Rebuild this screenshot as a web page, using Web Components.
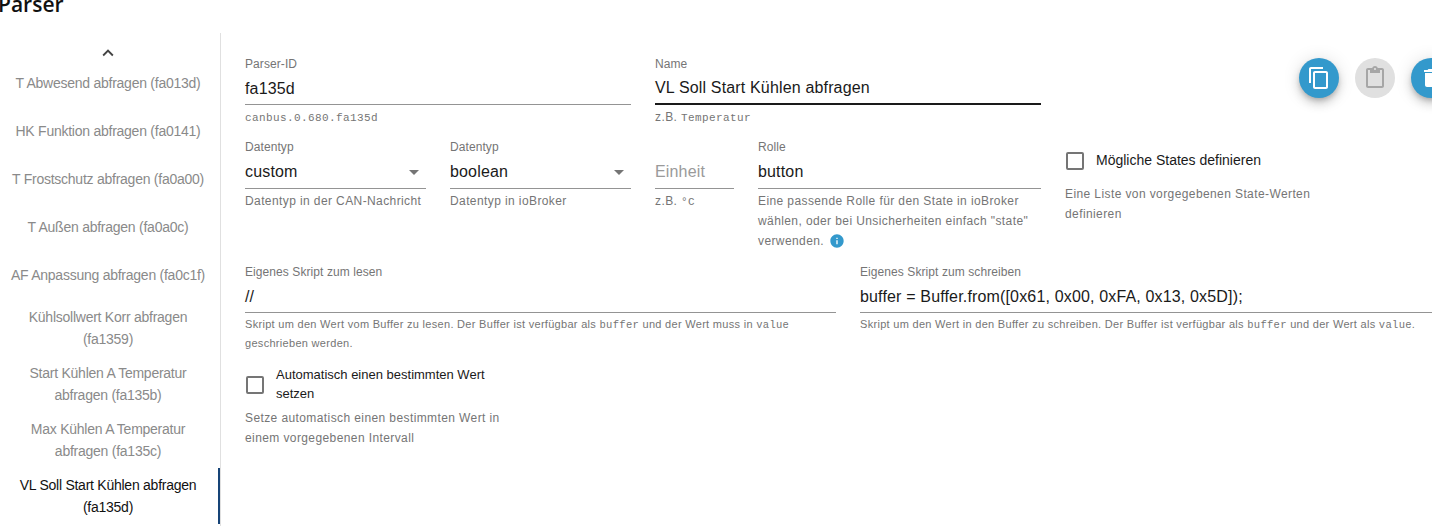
<!DOCTYPE html>
<html lang="de">
<head>
<meta charset="utf-8">
<title>Parser</title>
<style>
  html, body { margin: 0; height: 100%; background: #fff; overflow: hidden; }
  body { font-family: "Liberation Sans", Arial, sans-serif; }
  code { font-family: "Liberation Mono", monospace; font-size: var(--code-fs, 11px); }
</style>
</head>
<body>
<parser-page>
  <span slot="title">Parser</span>

  <tab-list slot="side">
    <tab-item>T Abwesend abfragen (fa013d)</tab-item>
    <tab-item>HK Funktion abfragen (fa0141)</tab-item>
    <tab-item>T Frostschutz abfragen (fa0a00)</tab-item>
    <tab-item>T Außen abfragen (fa0a0c)</tab-item>
    <tab-item>AF Anpassung abfragen (fa0c1f)</tab-item>
    <tab-item style="min-height:57px">Kühlsollwert Korr abfragen (fa1359)</tab-item>
    <tab-item>Start Kühlen A Temperatur abfragen (fa135b)</tab-item>
    <tab-item>Max Kühlen A Temperatur abfragen (fa135c)</tab-item>
    <tab-item selected>VL Soll Start Kühlen abfragen (fa135d)</tab-item>
  </tab-list>

  <form-row style="--input-h:31px">
    <text-field style="width:386px" label="Parser-ID" value="fa135d"><code>canbus.0.680.fa135d</code></text-field>
    <text-field style="width:386px" label="Name" value="VL Soll Start Kühlen abfragen" focused>z.B. <code>Temperatur</code></text-field>
    <fab-group>
      <fab-button icon="copy"></fab-button>
      <fab-button icon="paste" disabled></fab-button>
      <fab-button icon="delete"></fab-button>
    </fab-group>
  </form-row>

  <form-row style="margin-bottom:13px">
    <text-field style="width:181px" label="Datentyp" value="custom" select>Datentyp in der CAN-Nachricht</text-field>
    <text-field style="width:181px" label="Datentyp" value="boolean" select>Datentyp in ioBroker</text-field>
    <text-field style="width:79px" placeholder="Einheit">z.B. <code>°C</code></text-field>
    <text-field style="width:283px" label="Rolle" value="button">Eine passende Rolle für den State in ioBroker wählen, oder bei Unsicherheiten einfach "state" verwenden. <info-icon></info-icon></text-field>
    <check-field style="width:283px;margin-top:3px" label="Mögliche States definieren">Eine Liste von vorgegebenen State-Werten definieren</check-field>
  </form-row>

  <form-row style="margin-bottom:14px;--input-h:31px;--help-lh:18px;--help-fs:11px;--help-ls:.3px;--code-fs:10.5px">
    <text-field style="width:591px" label="Eigenes Skript zum lesen" value="//">Skript um den Wert vom Buffer zu lesen. Der Buffer ist verfügbar als <code>buffer</code> und der Wert muss in <code>value</code> geschrieben werden.</text-field>
    <text-field style="width:591px" label="Eigenes Skript zum schreiben" value="buffer = Buffer.from([0x61, 0x00, 0xFA, 0x13, 0x5D]);">Skript um den Wert in den Buffer zu schreiben. Der Buffer ist verfügbar als <code>buffer</code> und der Wert als <code>value</code>.</text-field>
  </form-row>

  <form-row>
    <check-field style="width:262px;--check-fs:13px;--check-lh:19px" label="Automatisch einen bestimmten Wert setzen">Setze automatisch einen bestimmten Wert in einem vorgegebenen Intervall</check-field>
  </form-row>
</parser-page>

<script>
const icons = {
  copy: "M16 1H4c-1.1 0-2 .9-2 2v14h2V3h12V1zm3 4H8c-1.1 0-2 .9-2 2v14c0 1.1.9 2 2 2h11c1.1 0 2-.9 2-2V7c0-1.1-.9-2-2-2zm0 16H8V7h11v14z",
  paste: "M19 2h-4.18C14.4.84 13.3 0 12 0c-1.3 0-2.4.84-2.82 2H5c-1.1 0-2 .9-2 2v16c0 1.1.9 2 2 2h14c1.1 0 2-.9 2-2V4c0-1.1-.9-2-2-2zm-7 0c.55 0 1 .45 1 1s-.45 1-1 1-1-.45-1-1 .45-1 1-1zm7 18H5V4h2v3h10V4h2v16z",
  delete: "M6 19c0 1.1.9 2 2 2h8c1.1 0 2-.9 2-2V7H6v12zM19 4h-3.5l-1-1h-5l-1 1H5v2h14V4z",
  up: "M12 8l-6 6 1.41 1.41L12 10.83l4.59 4.58L18 14z",
  arrow: "M7 10l5 5 5-5z",
  info: "M12 2C6.48 2 2 6.48 2 12s4.48 10 10 10 10-4.48 10-10S17.52 2 12 2zm1 15h-2v-6h2v6zm0-8h-2V7h2v2z"
};
const svg = (name, size) => `<svg width="${size}" height="${size}" viewBox="0 0 24 24" fill="currentColor"><path d="${icons[name]}"/></svg>`;

class ParserPage extends HTMLElement {
  constructor() {
    super();
    this.attachShadow({ mode: "open" });
    this.shadowRoot.innerHTML = `
      <style>
        :host { display: block; height: 527px; overflow: hidden; }
        h1 { margin: -8px 0 0 -2px; height: 41px; font-family: "Open Sans", sans-serif; font-size: 21px; line-height: 24px; font-weight: 600; color: #111; }
        .body { display: flex; height: 493px; }
        .main { flex: none; width: 1206px; padding: 23px 0 0 24px; }
      </style>
      <h1><slot name="title"></slot></h1>
      <div class="body">
        <slot name="side"></slot>
        <div class="main"><slot></slot></div>
      </div>`;
  }
}
customElements.define("parser-page", ParserPage);

class TabList extends HTMLElement {
  constructor() {
    super();
    this.attachShadow({ mode: "open" });
    this.shadowRoot.innerHTML = `
      <style>
        :host { display: block; flex: none; width: 220px; border-right: 1px solid #e0e0e0; box-sizing: content-box; }
        .scroll { display: flex; justify-content: center; height: 26px; padding-top: 9px; box-sizing: border-box; color: #444; margin-right: 5px; }
      </style>
      <div class="scroll">${svg("up", 22)}</div>
      <slot></slot>`;
  }
}
customElements.define("tab-list", TabList);

class TabItem extends HTMLElement {
  constructor() {
    super();
    this.attachShadow({ mode: "open" });
    this.shadowRoot.innerHTML = `
      <style>
        :host { display: flex; align-items: center; justify-content: center; min-height: 48px; box-sizing: border-box;
          padding: 6px 14px 6px 10px; text-align: center; font-size: 14px; line-height: 22px; letter-spacing: -.25px; color: #8a8a8a; }
        :host([selected]) { color: #111; box-shadow: inset -2px 0 0 #164477; }
      </style>
      <slot></slot>`;
  }
}
customElements.define("tab-item", TabItem);

class FormRow extends HTMLElement {
  constructor() {
    super();
    this.attachShadow({ mode: "open" });
    this.shadowRoot.innerHTML = `
      <style>
        :host { display: flex; gap: 24px; align-items: flex-start; margin-bottom: 11px; }
      </style>
      <slot></slot>`;
  }
}
customElements.define("form-row", FormRow);

class TextField extends HTMLElement {
  constructor() {
    super();
    this.attachShadow({ mode: "open" });
  }
  connectedCallback() {
    const label = this.getAttribute("label") || "";
    const value = this.getAttribute("value") || "";
    const placeholder = this.getAttribute("placeholder") || "";
    this.shadowRoot.innerHTML = `
      <style>
        :host { display: block; flex: none; }
        .label { height: 16px; font-size: 12px; line-height: 17px; letter-spacing: .08px; color: #757575; margin-bottom: 1px; }
        .input { display: flex; align-items: center; justify-content: space-between; height: var(--input-h, 32px); border-bottom: 1px solid #949494;
          font-size: 16px; letter-spacing: .16px; color: #1a1a1a; white-space: nowrap; }
        .input .ph { color: #9a9a9a; }
        .input svg { color: #757575; flex: none; }
        :host([focused]) .input { border-bottom: 2px solid #1a1a1a; height: calc(var(--input-h, 32px) - 1px); }
        .help { margin-top: 2px; font-size: var(--help-fs, 12px); line-height: var(--help-lh, 20px); letter-spacing: var(--help-ls, .4px); color: #757575; }
      </style>
      <div class="label">${label}</div>
      <div class="input">
        <span>${value}<span class="ph">${placeholder}</span></span>
        ${this.hasAttribute("select") ? svg("arrow", 24) : ""}
      </div>
      <div class="help"><slot></slot></div>`;
  }
}
customElements.define("text-field", TextField);

class CheckField extends HTMLElement {
  constructor() {
    super();
    this.attachShadow({ mode: "open" });
  }
  connectedCallback() {
    this.shadowRoot.innerHTML = `
      <style>
        :host { display: block; flex: none; }
        .top { display: flex; align-items: center; gap: 12px; font-size: var(--check-fs, 14px); line-height: var(--check-lh, 20px); color: #1a1a1a; padding: 0 0 0 1px; min-height: 38px; }
        .top span:last-child { margin-top: -2px; }
        .box { flex: none; width: 14px; height: 14px; border: 2px solid #757575; border-radius: 2px; }
        .help { margin-top: 4px; font-size: 12px; line-height: 20px; letter-spacing: .4px; color: #757575; }
      </style>
      <div class="top"><span class="box"></span><span>${this.getAttribute("label")}</span></div>
      <div class="help"><slot></slot></div>`;
  }
}
customElements.define("check-field", CheckField);

class FabGroup extends HTMLElement {
  constructor() {
    super();
    this.attachShadow({ mode: "open" });
    this.shadowRoot.innerHTML = `
      <style>
        :host { display: flex; gap: 16px; margin-left: auto; margin-top: 2px; }
      </style>
      <slot></slot>`;
  }
}
customElements.define("fab-group", FabGroup);

class FabButton extends HTMLElement {
  constructor() {
    super();
    this.attachShadow({ mode: "open" });
  }
  connectedCallback() {
    this.shadowRoot.innerHTML = `
      <style>
        :host { display: flex; align-items: center; justify-content: center; width: 40px; height: 40px; border-radius: 50%;
          background: #3399cc; color: #fff;
          box-shadow: 0 3px 5px -1px rgba(0,0,0,.2), 0 6px 10px 0 rgba(0,0,0,.14), 0 1px 18px 0 rgba(0,0,0,.12); }
        :host([disabled]) { background: #e0e0e0; color: #a6a6a6; box-shadow: none; }
      </style>
      ${svg(this.getAttribute("icon"), 24)}`;
  }
}
customElements.define("fab-button", FabButton);

class InfoIcon extends HTMLElement {
  constructor() {
    super();
    this.attachShadow({ mode: "open" });
    this.shadowRoot.innerHTML = `
      <style>
        :host { display: inline-block; vertical-align: -4px; height: 16px; color: #3399cc; margin-left: 1px; }
      </style>
      ${svg("info", 16)}`;
  }
}
customElements.define("info-icon", InfoIcon);
</script>
</body>
</html>
